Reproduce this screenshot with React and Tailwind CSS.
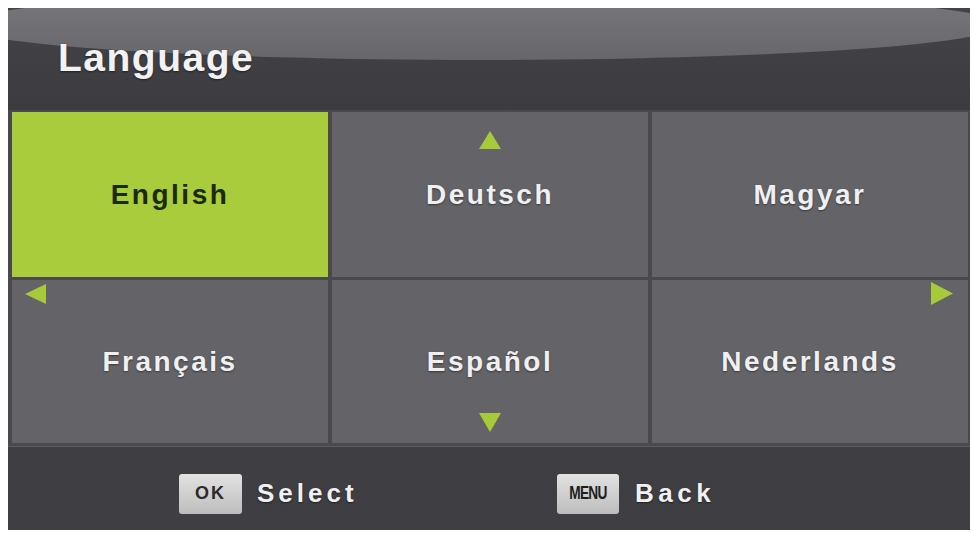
export default function App() {
  const langs = [
    { name: "English", active: true },
    { name: "Deutsch", arrow: "up" },
    { name: "Magyar" },
    { name: "Français", arrow: "left" },
    { name: "Español", arrow: "down" },
    { name: "Nederlands", arrow: "right" },
  ];

  const arrow = (dir) => {
    if (dir === "up")
      return (
        <svg className="absolute top-[19px] left-1/2 -translate-x-1/2" width="22" height="18" viewBox="0 0 22 18">
          <polygon points="11,0 22,18 0,18" fill="#a6ca3a" />
        </svg>
      );
    if (dir === "down")
      return (
        <svg className="absolute bottom-[11px] left-1/2 -translate-x-1/2" width="22" height="19" viewBox="0 0 22 19">
          <polygon points="0,0 22,0 11,19" fill="#a6ca3a" />
        </svg>
      );
    if (dir === "left")
      return (
        <svg className="absolute top-[4px] left-[13px]" width="21" height="20" viewBox="0 0 21 20">
          <polygon points="0,10 21,0 21,20" fill="#a6ca3a" />
        </svg>
      );
    return (
      <svg className="absolute top-[2px] right-[15px]" width="22" height="23" viewBox="0 0 22 23">
        <polygon points="0,0 22,11.5 0,23" fill="#a6ca3a" />
      </svg>
    );
  };

  return (
    <div className="w-[973px] h-[534px] bg-white pt-[8px] pl-[8px] font-['Liberation_Sans',Arial,sans-serif]">
      <div className="w-[962px] h-[522px] flex flex-col bg-[#4a494e]">
        {/* title bar */}
        <div className="relative h-[102px] overflow-hidden bg-gradient-to-b from-[#444348] to-[#3c3b40] flex items-center pl-[50px]">
          <div className="absolute left-[-48px] top-[-18px] w-[1040px] h-[70px] rounded-[50%] bg-gradient-to-b from-[#7a797e] to-[#67666b]" />
          <span className="relative text-[39px] font-bold leading-none tracking-[1.5px] text-[#f2f2f2] -mt-[3px] [text-shadow:0_1px_2px_rgba(0,0,0,0.5)]">
            Language
          </span>
        </div>

        {/* language grid */}
        <div className="grid grid-cols-3 grid-rows-[165px_163px] gap-x-[4px] gap-y-[3px] pt-[2px] pb-[3px] pl-[4px] pr-[2px] bg-[#4a494e] border-b border-[#5d5c61]">
          {langs.map((l) => (
            <div
              key={l.name}
              className={
                "relative flex items-center justify-center " +
                (l.active ? "bg-[#a8cc3b]" : "bg-[#646368]")
              }
            >
              {l.arrow && arrow(l.arrow)}
              <span
                className={
                  "text-[28px] font-bold tracking-[2.5px] " +
                  (l.active
                    ? "text-[#1c2a0c]"
                    : "text-[#f0f0f0] [text-shadow:0_1px_2px_rgba(0,0,0,0.45)]")
                }
              >
                {l.name}
              </span>
            </div>
          ))}
        </div>

        {/* footer hints */}
        <div className="flex-1 bg-[#3f3e43] flex items-center pt-[10px] pl-[171px]">
          <div className="w-[378px] flex items-center gap-[15px]">
            <div className="w-[63px] h-[40px] rounded-[3px] bg-gradient-to-b from-[#e2e2e2] to-[#bdbdbd] flex items-center justify-center">
              <span className="text-[18px] font-bold text-[#2a2a2a] tracking-[2px]">OK</span>
            </div>
            <span className="text-[26px] font-bold tracking-[4px] text-[#f0f0f0] [text-shadow:0_1px_2px_rgba(0,0,0,0.5)]">Select</span>
          </div>
          <div className="flex items-center gap-[16px]">
            <div className="w-[62px] h-[40px] rounded-[3px] bg-gradient-to-b from-[#e2e2e2] to-[#bdbdbd] flex items-center justify-center">
              <span className="inline-block scale-x-[0.72] text-[19px] font-bold text-[#1e1e1e] tracking-[-1px]">MENU</span>
            </div>
            <span className="text-[26px] font-bold tracking-[4.5px] text-[#f0f0f0] [text-shadow:0_1px_2px_rgba(0,0,0,0.5)]">Back</span>
          </div>
        </div>
      </div>
    </div>
  );
}
